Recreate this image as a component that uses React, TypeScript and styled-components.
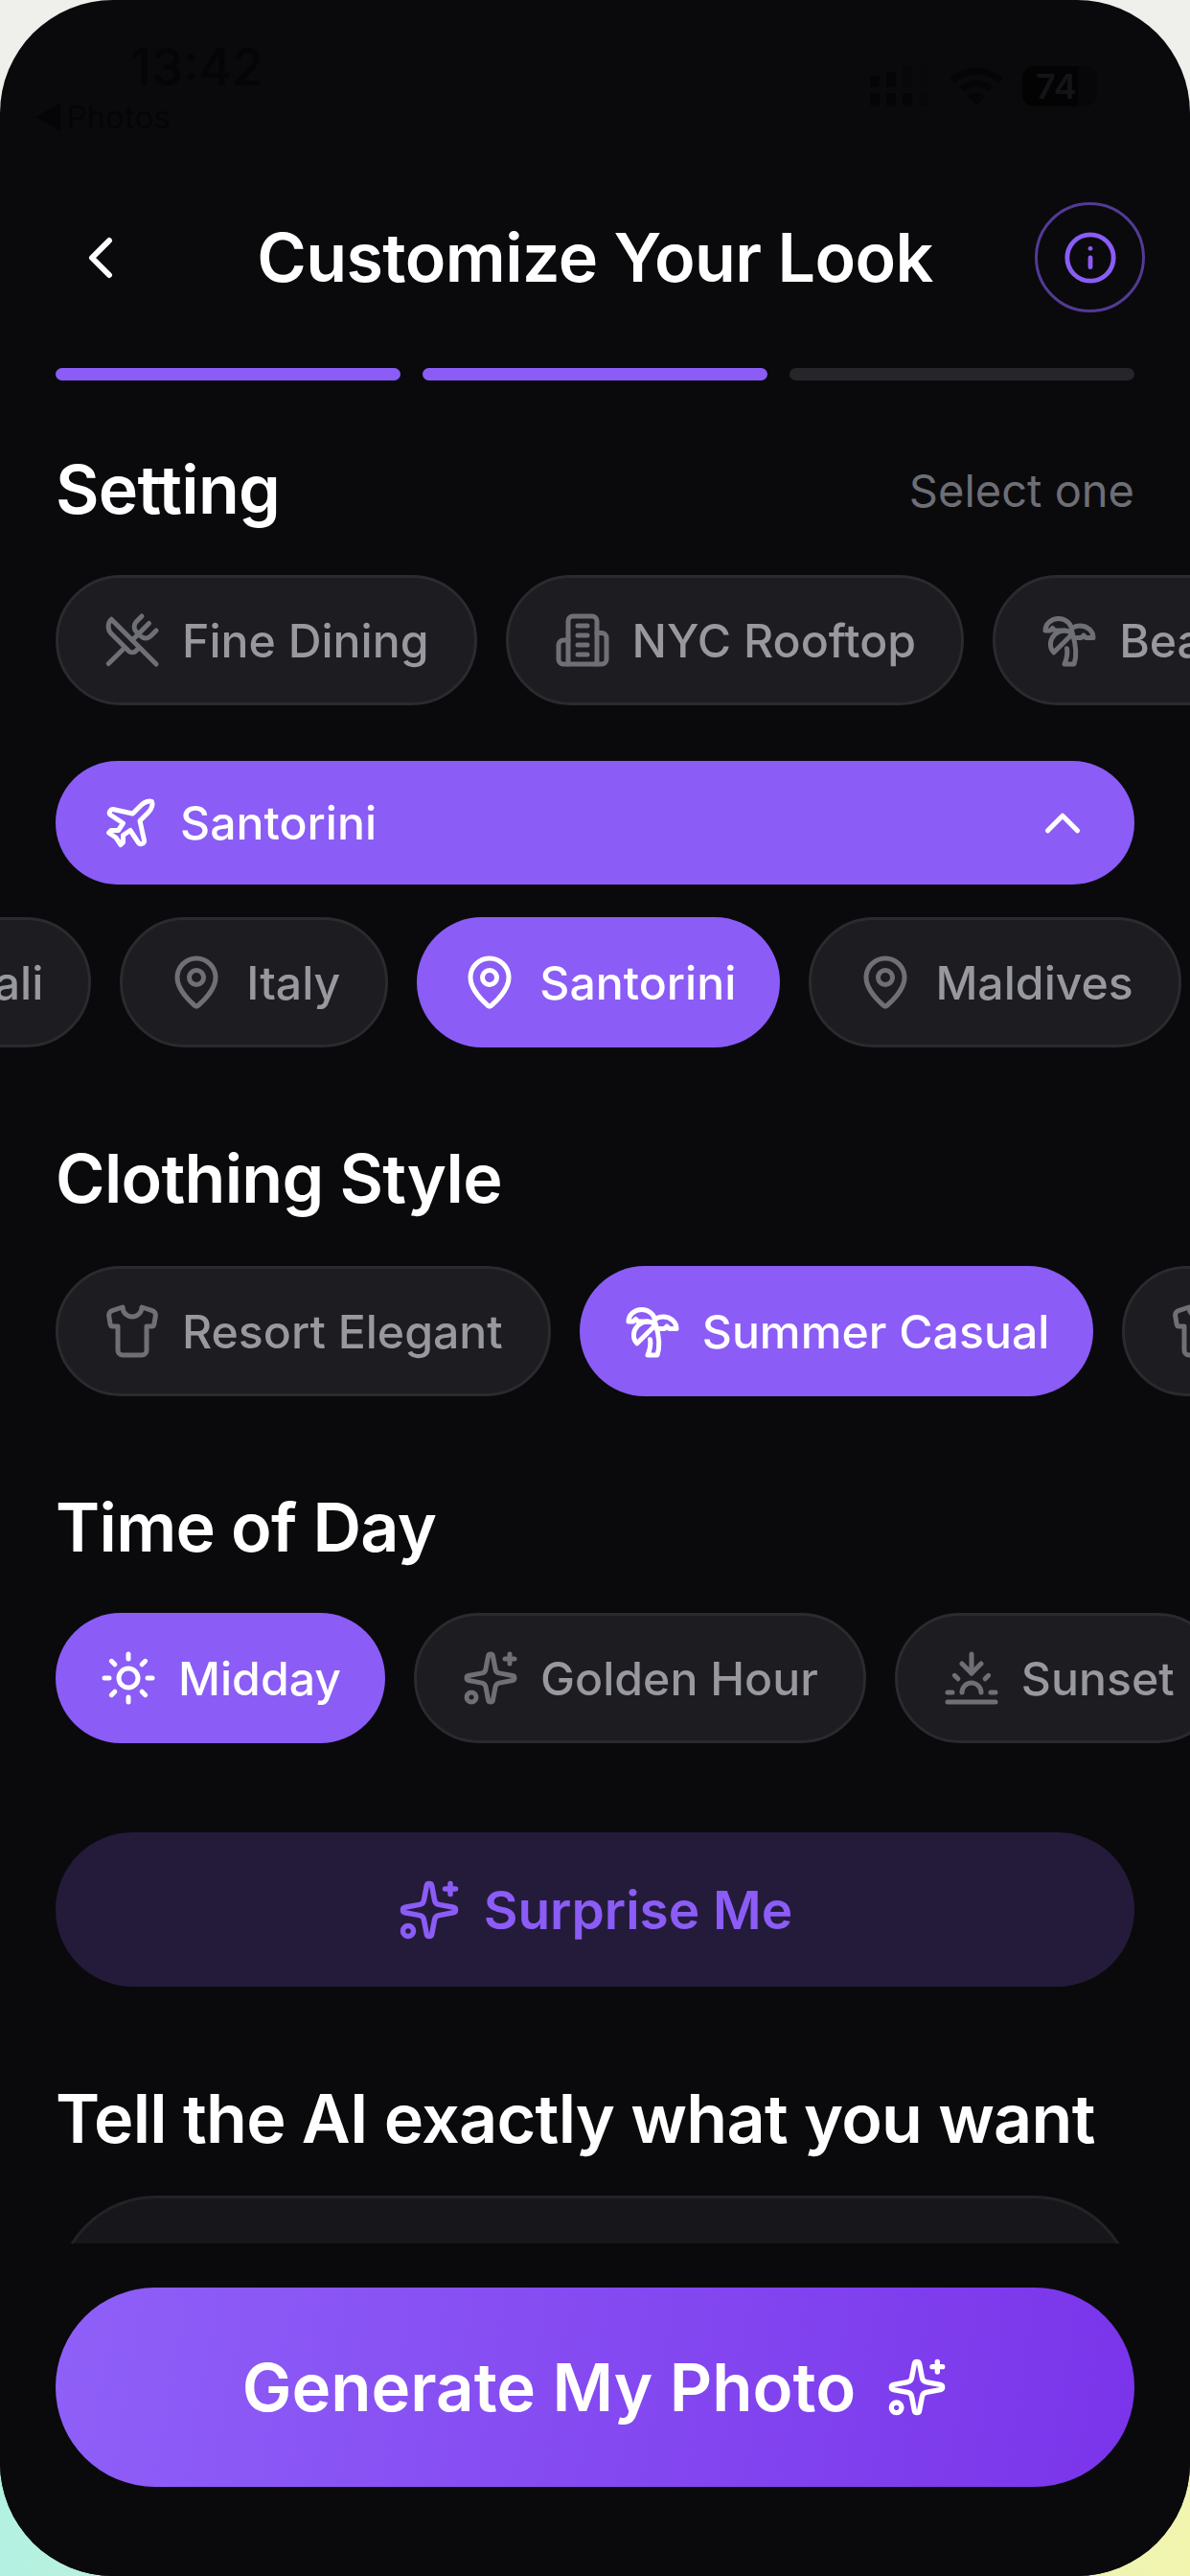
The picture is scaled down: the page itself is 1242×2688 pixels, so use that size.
import { useLayoutEffect, useRef } from 'react'
import type { ReactNode } from 'react'
import styled, { createGlobalStyle } from 'styled-components'
import {
  ChevronLeft,
  ChevronUp,
  Info,
  MapPin,
  Plane,
  Shirt,
  Sparkles,
  Sun,
  Sunset,
  TreePalm,
  UtensilsCrossed,
} from 'lucide-react'

const GlobalStyle = createGlobalStyle`
  * {
    box-sizing: border-box;
  }

  html,
  body {
    margin: 0;
    padding: 0;
    background: #efefeb;
    font-family: Inter, "Liberation Sans", sans-serif;
  }
`

const Backdrop = styled.div`
  width: 1242px;
  height: 2688px;
  background: linear-gradient(to bottom, #efefeb 0 50%, transparent 50%),
    linear-gradient(to right, #b4f1e2, #f2f5ae);
`

const Screen = styled.div`
  width: 1242px;
  height: 2688px;
  display: flex;
  flex-direction: column;
  overflow: hidden;
  background: #0a0a0d;
  border-radius: 118px;
  color: #fff;
`

const StatusBar = styled.div`
  height: 211px;
  flex: none;
  padding: 43px 97px 0 36px;
  display: flex;
  justify-content: space-between;
  align-items: flex-start;
  color: #050507;
`

const StatusLeft = styled.div`
  display: flex;
  flex-direction: column;
`

const Time = styled.div`
  margin-left: 100px;
  font-size: 53px;
  line-height: 54px;
  font-weight: 500;
`

const BackLink = styled.div`
  margin-top: 7px;
  font-size: 33px;
  line-height: 36px;
  word-spacing: -6px;
`

const StatusIcons = styled.div`
  margin-top: 26px;
  display: flex;
  align-items: center;
  gap: 20px;
`

const Battery = styled.div`
  width: 78px;
  height: 42px;
  border-radius: 12px;
  background: linear-gradient(to right, #030304 0 74%, #070709 74%);
  color: #141418;
  font-size: 36px;
  font-weight: 600;
  line-height: 42px;
  padding-left: 14px;
`

const Header = styled.header`
  flex: none;
  height: 115px;
  padding: 0 47px;
  display: grid;
  grid-template-columns: 115px 1fr 115px;
  align-items: center;
`

const BackButton = styled.button`
  width: 115px;
  height: 115px;
  padding: 0;
  display: flex;
  align-items: center;
  justify-content: center;
  border: 0;
  background: none;
  color: #fff;
`

const Title = styled.h1`
  margin: 0;
  text-align: center;
  font-size: 70px;
  line-height: 80px;
  font-weight: 600;
  letter-spacing: -0.6px;
  white-space: nowrap;
`

const InfoButton = styled.button`
  width: 115px;
  height: 115px;
  padding: 0;
  display: flex;
  align-items: center;
  justify-content: center;
  border: 3px solid #533a94;
  border-radius: 50%;
  background: none;
  color: #8b5cf6;
`

const Progress = styled.div`
  flex: none;
  margin: 58px 58px 0;
  display: grid;
  grid-template-columns: repeat(3, 1fr);
  gap: 23px;
`

const ProgressStep = styled.div<{ $done?: boolean }>`
  height: 13px;
  border-radius: 7px;
  background: ${(p) => (p.$done ? '#8b5cf6' : '#26262a')};
`

const Body = styled.main`
  flex: 1;
  min-height: 0;
  overflow: hidden;
`

const SectionHead = styled.div<{ $top: number }>`
  margin: ${(p) => p.$top}px 58px 0;
  display: flex;
  align-items: center;
  justify-content: space-between;
`

const SectionTitle = styled.h2`
  margin: 0;
  font-size: 70px;
  line-height: 80px;
  font-weight: 600;
  letter-spacing: -0.7px;
`

const Hint = styled.span`
  font-size: 47px;
  color: #6e6e75;
`

const ChipRow = styled.div<{ $top: number }>`
  margin-top: ${(p) => p.$top}px;
  padding: 0 58px;
  display: flex;
  gap: 30px;
  overflow-x: auto;
  scrollbar-width: none;
`

const Chip = styled.div<{ $active?: boolean }>`
  flex: none;
  height: 136px;
  padding: ${(p) => (p.$active ? '0 46px' : '0 47px')};
  display: flex;
  align-items: center;
  gap: 22px;
  border-radius: 68px;
  border: ${(p) => (p.$active ? '0' : '3px solid #2a2a2f')};
  background: ${(p) => (p.$active ? '#8b5cf6' : '#1c1c21')};
  color: ${(p) => (p.$active ? '#fff' : '#98989f')};
  font-size: 48.2px;
  font-weight: 500;
  white-space: nowrap;

  svg {
    color: ${(p) => (p.$active ? '#fff' : '#6f6f76')};
  }
`

const Dropdown = styled.div`
  margin: 58px 58px 0;
  height: 129px;
  padding: 0 44px 0 48px;
  display: flex;
  align-items: center;
  justify-content: space-between;
  border-radius: 65px;
  background: #8b5cf6;
  font-size: 48.2px;
  font-weight: 500;
`

const DropdownLabel = styled.div`
  display: flex;
  align-items: center;
  gap: 22px;
`

const SurpriseButton = styled.button`
  width: 1126px;
  height: 161px;
  margin: 93px 58px 0;
  display: flex;
  align-items: center;
  justify-content: center;
  gap: 24px;
  border: 0;
  border-radius: 81px;
  background: #241b3b;
  color: #8b5cf6;
  font-family: inherit;
  font-size: 55px;
  font-weight: 600;
`

const PromptBox = styled.div`
  margin: 40px 58px 0;
  height: 300px;
  border: 3px solid #232327;
  border-radius: 105px;
  background: #16161b;
`

const Footer = styled.footer`
  flex: none;
  height: 347px;
  padding: 46px 58px 0;
  background: #0a0a0d;
`

const GenerateButton = styled.button`
  width: 100%;
  height: 208px;
  display: flex;
  align-items: center;
  justify-content: center;
  gap: 32px;
  border: 0;
  border-radius: 104px;
  background: linear-gradient(100deg, #8f60f8, #7a34ea);
  color: #fff;
  font-family: inherit;
  font-size: 69px;
  font-weight: 600;
`

const iconProps = { size: 60, strokeWidth: 2 }

// the tall tower with two side wings, which the current Building2 no longer draws
const TowerIcon = () => (
  <svg width="60" height="60" viewBox="0 0 24 24" fill="none" stroke="currentColor" strokeWidth="2" strokeLinecap="round" strokeLinejoin="round">
    <path d="M6 22V4a2 2 0 0 1 2-2h8a2 2 0 0 1 2 2v18Z" />
    <path d="M6 12H4a2 2 0 0 0-2 2v6a2 2 0 0 0 2 2h2" />
    <path d="M18 9h2a2 2 0 0 1 2 2v9a2 2 0 0 1-2 2h-2" />
    <path d="M10 6h4" />
    <path d="M10 10h4" />
    <path d="M10 14h4" />
    <path d="M10 18h4" />
  </svg>
)

type ChipItem = { label: string; icon: ReactNode; active?: boolean }

const settings: ChipItem[] = [
  { label: 'Fine Dining', icon: <UtensilsCrossed {...iconProps} /> },
  { label: 'NYC Rooftop', icon: <TowerIcon /> },
  { label: 'Beach', icon: <TreePalm {...iconProps} /> },
]

const places: ChipItem[] = [
  { label: 'Bali', icon: <MapPin {...iconProps} /> },
  { label: 'Italy', icon: <MapPin {...iconProps} /> },
  { label: 'Santorini', icon: <MapPin {...iconProps} />, active: true },
  { label: 'Maldives', icon: <MapPin {...iconProps} /> },
]

const clothing: ChipItem[] = [
  { label: 'Resort Elegant', icon: <Shirt {...iconProps} /> },
  { label: 'Summer Casual', icon: <TreePalm {...iconProps} />, active: true },
  { label: 'Formal', icon: <Shirt {...iconProps} /> },
]

const times: ChipItem[] = [
  { label: 'Midday', icon: <Sun {...iconProps} />, active: true },
  { label: 'Golden Hour', icon: <Sparkles {...iconProps} /> },
  { label: 'Sunset', icon: <Sunset {...iconProps} /> },
]

const Chips = ({ items, top, scrollTo = 0 }: { items: ChipItem[]; top: number; scrollTo?: number }) => {
  const rowRef = useRef<HTMLDivElement>(null)

  useLayoutEffect(() => {
    if (rowRef.current) rowRef.current.scrollLeft = scrollTo
  }, [scrollTo])

  return (
    <ChipRow ref={rowRef} $top={top}>
      {items.map((item) => (
        <Chip key={item.label} $active={item.active}>
          {item.icon}
          {item.label}
        </Chip>
      ))}
    </ChipRow>
  )
}

const SignalIcon = () => (
  <svg width="63" height="42" viewBox="0 0 63 42" fill="currentColor">
    <rect x="0" y="10" width="10" height="12" rx="3" />
    <rect x="17" y="6" width="10" height="16" rx="3" />
    <rect x="34" y="0" width="10" height="22" rx="3" opacity="0.5" />
    <rect x="51" y="0" width="10" height="22" rx="3" opacity="0.2" />
    <rect x="0" y="28" width="10" height="14" rx="3" />
    <rect x="17" y="28" width="10" height="14" rx="3" />
    <rect x="34" y="28" width="10" height="14" rx="3" />
    <rect x="51" y="28" width="10" height="14" rx="3" opacity="0.5" />
  </svg>
)

const WifiIcon = () => (
  <svg width="56" height="40" viewBox="0 0 56 40" fill="none" stroke="currentColor" strokeWidth="7">
    <path d="M3 14 C17 1 39 1 53 14" />
    <path d="M13 23 C22 15 34 15 43 23" />
    <path d="M28 40 L19 30 C24 26 32 26 37 30 Z" fill="currentColor" stroke="none" />
  </svg>
)

export default function App() {
  return (
    <Backdrop>
      <GlobalStyle />
      <Screen>
        <StatusBar>
          <StatusLeft>
            <Time>13:42</Time>
            <BackLink>◀ Photos</BackLink>
          </StatusLeft>
          <StatusIcons>
            <SignalIcon />
            <WifiIcon />
            <Battery>74</Battery>
          </StatusIcons>
        </StatusBar>

        <Header>
          <BackButton>
            <ChevronLeft size={72} strokeWidth={2} />
          </BackButton>
          <Title>Customize Your Look</Title>
          <InfoButton>
            <Info size={58} strokeWidth={2} />
          </InfoButton>
        </Header>

        <Progress>
          <ProgressStep $done />
          <ProgressStep $done />
          <ProgressStep />
        </Progress>

        <Body>
          <SectionHead $top={74}>
            <SectionTitle>Setting</SectionTitle>
            <Hint>Select one</Hint>
          </SectionHead>
          <Chips items={settings} top={49} />

          <Dropdown>
            <DropdownLabel>
              <Plane {...iconProps} />
              Santorini
            </DropdownLabel>
            <ChevronUp size={62} strokeWidth={2} />
          </Dropdown>
          <Chips items={places} top={34} scrollTo={228} />

          <SectionHead $top={97}>
            <SectionTitle>Clothing Style</SectionTitle>
          </SectionHead>
          <Chips items={clothing} top={51} />

          <SectionHead $top={97}>
            <SectionTitle>Time of Day</SectionTitle>
          </SectionHead>
          <Chips items={times} top={49} />

          <SurpriseButton>
            <Sparkles size={66} strokeWidth={2} />
            Surprise Me
          </SurpriseButton>

          <SectionHead $top={98}>
            <SectionTitle>Tell the AI exactly what you want</SectionTitle>
          </SectionHead>
          <PromptBox />
        </Body>

        <Footer>
          <GenerateButton>
            Generate My Photo
            <Sparkles size={64} strokeWidth={2} />
          </GenerateButton>
        </Footer>
      </Screen>
    </Backdrop>
  )
}
